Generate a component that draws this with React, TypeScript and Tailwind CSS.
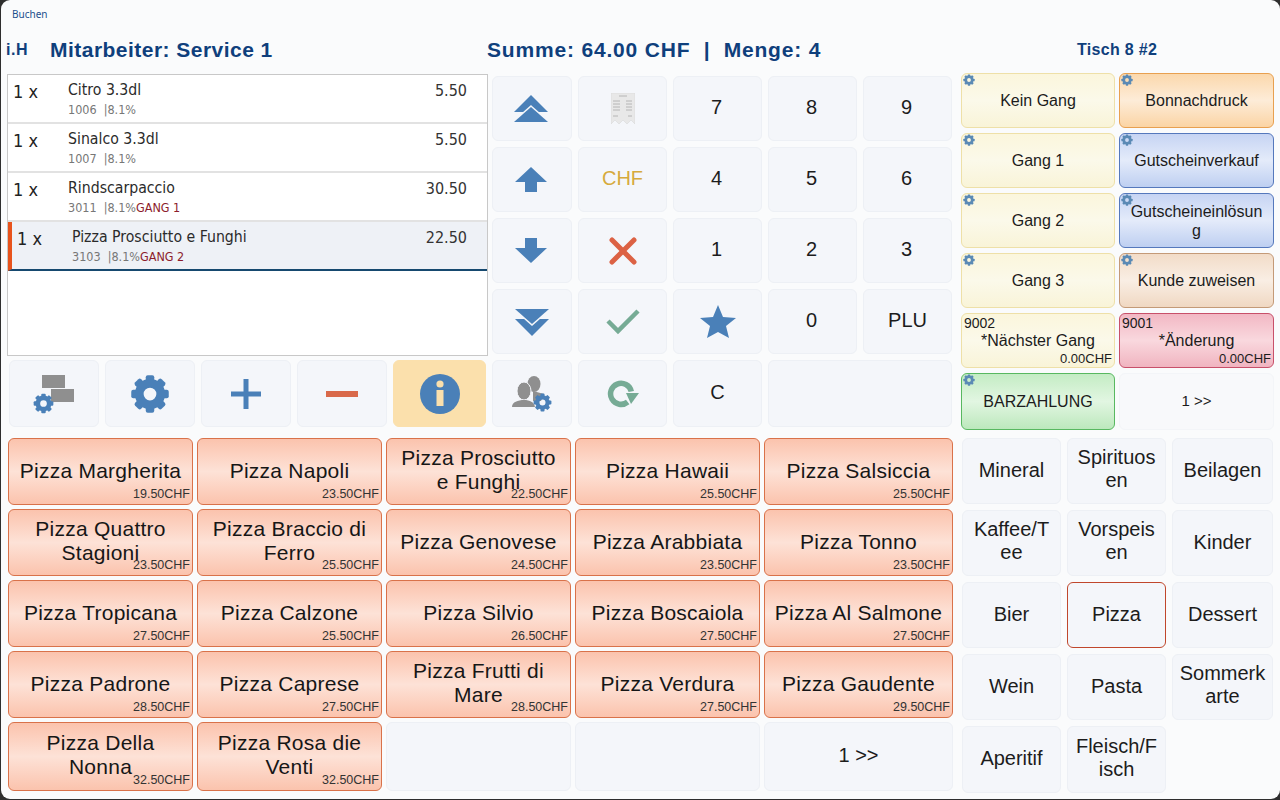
import "react";

const SANS = "font-['Liberation_Sans',Arial,sans-serif]";
const BLUE = "#4a80b8";
const GRAY_BTN = "border-[#edf0f5] bg-[#f4f6fa]";

function Gear({ size, color = BLUE }: { size: number; color?: string }) {
  return (
    <svg width={size} height={size} viewBox="0 0 32 32" fill={color}>
      {[0, 45, 90, 135, 180, 225, 270, 315].map((a) => (
        <rect key={a} x="12.6" y="1" width="6.8" height="8" rx="1.6" transform={`rotate(${a} 16 16)`} />
      ))}
      <circle cx="16" cy="16" r="8.6" fill="none" stroke={color} strokeWidth="7" />
    </svg>
  );
}

function Cfg() {
  return (
    <span className="absolute left-[1px] top-[0px] leading-none">
      <Gear size={12} color="#5b8ab5" />
    </span>
  );
}

function Plain({
  className = "",
  look = GRAY_BTN,
  children,
}: {
  className?: string;
  look?: string;
  children?: React.ReactNode;
}) {
  return (
    <div className={`flex items-center justify-center rounded-md border text-[#1c1c1c] ${look} ${className}`}>
      {children}
    </div>
  );
}

const icons: Record<string, React.ReactNode> = {
  top: (
    <svg width="34" height="28" viewBox="0 0 34 28" fill={BLUE}>
      <polygon points="17,0 34,17 0,17" />
      <polygon points="17,12 34,27 0,27" stroke="#f4f6fa" strokeWidth="3" paintOrder="stroke" />
    </svg>
  ),
  up: (
    <svg width="34" height="26" viewBox="0 0 34 26" fill={BLUE}>
      <polygon points="17,0 33,15 23,15 23,25 11,25 11,15 1,15" />
    </svg>
  ),
  down: (
    <svg width="34" height="26" viewBox="0 0 34 26" fill={BLUE}>
      <polygon points="11,0 23,0 23,10 33,10 17,25 1,10 11,10" />
    </svg>
  ),
  bottom: (
    <svg width="34" height="28" viewBox="0 0 34 28" fill={BLUE}>
      <polygon points="0,11 34,11 17,28" />
      <polygon points="0,1 34,1 17,16" stroke="#f4f6fa" strokeWidth="3" paintOrder="stroke" />
    </svg>
  ),
  receipt: (
    <svg width="24" height="32" viewBox="0 0 24 32">
      <path d="M0 0H24V31L20 27L16 31L12 27L8 31L4 27L0 31Z" fill="#e8e8e8" stroke="#d4d4d4" strokeWidth="0.5" />
      <path d="M8 3H16M2 8H9M15 8H21M2 11H9M15 11H21M2 14H9M15 14H21M2 17H9M15 17H21M2 23H7M17 23H21" stroke="#a8a8a8" strokeWidth="0.8" />
    </svg>
  ),
  cross: (
    <svg width="30" height="30" viewBox="0 0 30 30" stroke="#dc6244" strokeWidth="5" strokeLinecap="round">
      <path d="M4 4L26 26M26 4L4 26" />
    </svg>
  ),
  check: (
    <svg width="34" height="26" viewBox="0 0 34 26" fill="none" stroke="#76ab95" strokeWidth="4.5">
      <path d="M2 12L12 22L32 2" />
    </svg>
  ),
  star: (
    <svg width="36" height="34" viewBox="0 0 36 34" fill={BLUE}>
      <polygon points="18,0 23,12 36,13 26,21 29,33 18,27 7,33 10,21 0,13 13,12" />
    </svg>
  ),
  staff: (
    <svg width="40" height="36" viewBox="0 0 40 36">
      <ellipse cx="22" cy="8" rx="6.5" ry="8" fill="#8f8f8f" />
      <path d="M21 15L32 18L29 25H21Z" fill="#8f8f8f" />
      <ellipse cx="12" cy="15" rx="7" ry="9" fill="#8f8f8f" stroke="#f4f6fa" strokeWidth="1" />
      <path d="M0 31C0 26 6 24 12 24C18 24 22 26 23 31Z" fill="#8f8f8f" />
      <g transform="translate(21 17)">
        <Gear size={19} />
      </g>
    </svg>
  ),
  refresh: (
    <svg width="32" height="28" viewBox="0 0 32 28" fill="none">
      <path d="M20.7 22A10.5 10.5 0 1 1 24.3 11.5" stroke="#76ab95" strokeWidth="5.5" />
      <polygon points="19,13 32,13 24,24" fill="#76ab95" />
    </svg>
  ),
  tables: (
    <svg width="42" height="44" viewBox="0 0 42 44">
      <rect x="9" y="3" width="23" height="13" fill="#8f8f8f" />
      <rect x="18" y="17" width="23" height="13" fill="#8f8f8f" />
      <g transform="translate(0 21)">
        <Gear size={21} />
      </g>
    </svg>
  ),
  plus: (
    <svg width="30" height="30" viewBox="0 0 30 30" fill={BLUE}>
      <rect x="0" y="12.5" width="30" height="5" />
      <rect x="12.5" y="0" width="5" height="30" />
    </svg>
  ),
  minus: (
    <svg width="32" height="8" viewBox="0 0 32 8">
      <rect width="32" height="6" y="1" fill="#d9694a" />
    </svg>
  ),
  info: (
    <svg width="40" height="40" viewBox="0 0 40 40">
      <circle cx="20" cy="20" r="20" fill={BLUE} />
      <circle cx="20" cy="10" r="3.6" fill="#fbe0ac" />
      <rect x="16.5" y="16" width="7" height="16" fill="#fbe0ac" />
    </svg>
  ),
};

type Item = { name: string; code: string; price: string; gang?: string; on?: boolean };
const orders: Item[] = [
  { name: "Citro 3.3dl", code: "1006", price: "5.50" },
  { name: "Sinalco 3.3dl", code: "1007", price: "5.50" },
  { name: "Rindscarpaccio", code: "3011", price: "30.50", gang: "GANG 1" },
  { name: "Pizza Prosciutto e Funghi", code: "3103", price: "22.50", gang: "GANG 2", on: true },
];

function OrderRow({ item }: { item: Item }) {
  return (
    <div
      className={`flex h-[49px] shrink-0 ${
        item.on ? "border-b-2 border-l-4 border-b-[#16496f] border-l-[#e8531c] bg-[#eef1f6]" : "border-b-2 border-[#e2e2e2]"
      }`}
    >
      <div className="w-[60px] pl-[5px] pt-[4px] text-[18px] leading-[26px] text-[#222]">1 x</div>
      <div className="min-w-0 flex-1 pt-[4px]">
        <div className="text-[15.7px] leading-[22px] text-[#2b2b2b]">{item.name}</div>
        <div className="mt-[2px] text-[12.5px] leading-[14px] text-[#777]">
          {item.code}
          <span className="ml-[7px]">|8.1%</span>
          <span className="text-[#8c1c2c]">{item.gang}</span>
        </div>
      </div>
      <div className="w-[75px] pr-[20px] pt-[5px] text-right text-[16px] leading-[22px] text-[#333]">{item.price}</div>
    </div>
  );
}

const pad: { icon?: string; text?: string; cls?: string }[] = [
  { icon: "top", cls: "pr-[2px]" },
  { icon: "receipt" },
  { text: "7", cls: "pr-[2px]" },
  { text: "8", cls: "pr-[2px]" },
  { text: "9", cls: "pr-[2px]" },
  { icon: "up", cls: "pr-[2px]" },
  { text: "CHF", cls: "text-[#d6aa3c]" },
  { text: "4", cls: "pr-[2px]" },
  { text: "5", cls: "pr-[2px]" },
  { text: "6", cls: "pr-[2px]" },
  { icon: "down", cls: "pr-[2px]" },
  { icon: "cross" },
  { text: "1", cls: "pr-[2px]" },
  { text: "2", cls: "pr-[2px]" },
  { text: "3", cls: "pr-[2px]" },
  { icon: "bottom" },
  { icon: "check" },
  { icon: "star" },
  { text: "0", cls: "pr-[2px]" },
  { text: "PLU" },
];

const pizzas: [string, string][] = [
  ["Pizza Margherita", "19.50"],
  ["Pizza Napoli", "23.50"],
  ["Pizza Prosciutto\ne Funghi", "22.50"],
  ["Pizza Hawaii", "25.50"],
  ["Pizza Salsiccia", "25.50"],
  ["Pizza Quattro\nStagioni", "23.50"],
  ["Pizza Braccio di\nFerro", "25.50"],
  ["Pizza Genovese", "24.50"],
  ["Pizza Arabbiata", "23.50"],
  ["Pizza Tonno", "23.50"],
  ["Pizza Tropicana", "27.50"],
  ["Pizza Calzone", "25.50"],
  ["Pizza Silvio", "26.50"],
  ["Pizza Boscaiola", "27.50"],
  ["Pizza Al Salmone", "27.50"],
  ["Pizza Padrone", "28.50"],
  ["Pizza Caprese", "27.50"],
  ["Pizza Frutti di\nMare", "28.50"],
  ["Pizza Verdura", "27.50"],
  ["Pizza Gaudente", "29.50"],
  ["Pizza Della\nNonna", "32.50"],
  ["Pizza Rosa die\nVenti", "32.50"],
];

const YELLOW = "border-[#eee0a8] from-[#fbf6dc] via-[#fbf9ea] to-[#f9f4d8]";
const BLUE_BTN = "border-[#5578bc] from-[#c6d4f3] via-[#e4ebfa] to-[#becff1]";

const actions: { label: string; cls: string; cfg?: boolean; code?: string; price?: boolean }[] = [
  { label: "Kein Gang", cls: YELLOW, cfg: true },
  { label: "Bonnachdruck", cls: "border-[#e8a050] from-[#fbd8ac] via-[#fdecd8] to-[#fbd4a4]", cfg: true },
  { label: "Gang 1", cls: YELLOW, cfg: true },
  { label: "Gutscheinverkauf", cls: BLUE_BTN, cfg: true },
  { label: "Gang 2", cls: YELLOW, cfg: true },
  { label: "Gutscheineinlösun\ng", cls: BLUE_BTN, cfg: true },
  { label: "Gang 3", cls: YELLOW, cfg: true },
  { label: "Kunde zuweisen", cls: "border-[#c49a78] from-[#f2dcc8] via-[#f9eee4] to-[#f0d8c2]", cfg: true },
  { label: "*Nächster Gang", cls: YELLOW, code: "9002", price: true },
  { label: "*Änderung", cls: "border-[#c8506a] from-[#f2b8c4] via-[#f9d8de] to-[#f0b4c0]", code: "9001", price: true },
  { label: "BARZAHLUNG", cls: "border-[#58b860] from-[#c4ecc4] via-[#e2f6e2] to-[#bce8bc]", cfg: true },
];

const groups = [
  "Mineral",
  "Spirituos\nen",
  "Beilagen",
  "Kaffee/T\nee",
  "Vorspeis\nen",
  "Kinder",
  "Bier",
  "Pizza",
  "Dessert",
  "Wein",
  "Pasta",
  "Sommerk\narte",
  "Aperitif",
  "Fleisch/F\nisch",
];

export default function App() {
  return (
    <div className="h-[800px] w-[1280px] overflow-hidden bg-[#2e2e2e] pb-[1px] pl-[1px]">
      <div className={`${SANS} flex h-full flex-col overflow-hidden rounded-[9px] bg-[#fafbfc] pl-[1px] text-[#1c1c1c]`}>
        <div className="pl-[10px] pt-[7px] font-['Noto_Sans',sans-serif] text-[10px] leading-[14px] text-[#1c4f8c]">Buchen</div>

        <div className="mt-[16px] flex h-[26px] items-center font-bold text-[#0f3f7c]">
          <span className="w-[48px] pl-[4px] text-[16px] tracking-[0.5px]">i.H</span>
          <span className="w-[437px] text-[21px] tracking-[0.47px]">Mitarbeiter: Service 1</span>
          <span className="w-[590px] whitespace-pre text-[21px] tracking-[0.82px]">Summe: 64.00 CHF  |  Menge: 4</span>
          <span className="text-[16px] tracking-[0.3px]">Tisch 8 #2</span>
        </div>

        <div className="mt-[10px] flex">
          <div className="ml-[5px] mt-[1px] w-[481px]">
            <div className="flex h-[282px] flex-col border border-[#c8c8c8] bg-white font-['DejaVu_Sans_Condensed','DejaVu_Sans',sans-serif]">
              {orders.map((o) => (
                <OrderRow key={o.code} item={o} />
              ))}
            </div>
            <div className="ml-[2px] mt-[4px] grid h-[67px] grid-cols-[90px_90px_90px_90px_93px] gap-[6px]">
              <Plain>{icons.tables}</Plain>
              <Plain>
                <Gear size={40} />
              </Plain>
              <Plain>{icons.plus}</Plain>
              <Plain>{icons.minus}</Plain>
              <Plain look="border-[#fbe0ac] bg-[#fbe0ac]">{icons.info}</Plain>
            </div>
          </div>

          <div className="ml-[4px] mt-[3px] grid w-[460px] grid-cols-[80px_89px_89px_89px_89px] grid-rows-[65px_65px_65px_65px_67px] gap-[6px] text-[20px]">
            {pad.map((p, i) => (
              <Plain key={i} className={`${p.icon ? "" : "pb-[3px]"} ${p.cls ?? ""}`}>
                {p.icon ? icons[p.icon] : p.text}
              </Plain>
            ))}
            <Plain>{icons.staff}</Plain>
            <Plain>{icons.refresh}</Plain>
            <Plain className="pb-[3px]">C</Plain>
            <Plain className="col-span-2" />
          </div>

          <div className="ml-[9px] grid w-[313px] grid-cols-[154px_155px] grid-rows-[55px_55px_55px_55px_55px_57px] gap-x-[4px] gap-y-[5px] text-[16px]">
            {actions.map((a) => (
              <div
                key={a.label}
                className={`relative flex items-center justify-center whitespace-pre-line rounded-md border bg-gradient-to-b text-center leading-[19px] ${a.cls}`}
              >
                {a.cfg && <Cfg />}
                {a.code && <span className="absolute left-[2px] top-[1px] text-[14px] leading-[16px]">{a.code}</span>}
                <span>{a.label}</span>
                {a.price && <span className="absolute bottom-[0px] right-[2px] text-[13px] leading-[16px]">0.00CHF</span>}
              </div>
            ))}
            <Plain look="border-[#f3f5f8] bg-[#f8f9fb]" className="text-[15px]">
              1 &gt;&gt;
            </Plain>
          </div>
        </div>

        <div className="mt-[8px] flex">
          <div className="ml-[6px] grid w-[945px] grid-cols-[185px_185px_185px_185px_189px] grid-rows-[67px_67px_67px_67px_69px] gap-[4px]">
            {pizzas.map(([name, price]) => (
              <div
                key={name}
                className={`relative flex items-center justify-center whitespace-pre-line rounded-md border border-[#d9724a] bg-gradient-to-b from-[#fbc3ad] via-[#fde2d7] to-[#fbc3ad] text-center text-[21px] leading-[24px] tracking-[0.25px] text-[#161616] ${
                  name.includes("\n") ? "pb-[4px]" : "pb-[2px]"
                }`}
              >
                {name}
                <span className="absolute bottom-[2px] right-[2px] text-[12.5px] leading-[15px] tracking-normal text-[#333]">{price}CHF</span>
              </div>
            ))}
            <Plain />
            <Plain />
            <Plain className="pb-[3px] text-[20px]">1 &gt;&gt;</Plain>
          </div>

          <div className="ml-[9px] grid w-[311px] grid-cols-[99px_99px_101px] grid-rows-[66px_66px_66px_66px_67px] gap-[6px] text-[20px]">
            {groups.map((g) => (
              <Plain
                key={g}
                look={g === "Pizza" ? "border-[#c0472c] bg-[#f4f6fa]" : GRAY_BTN}
                className={`whitespace-pre-line text-center leading-[23px] ${g.includes("\n") ? "pb-[4px]" : "pb-[2px]"}`}
              >
                {g}
              </Plain>
            ))}
          </div>
        </div>
      </div>
    </div>
  );
}
